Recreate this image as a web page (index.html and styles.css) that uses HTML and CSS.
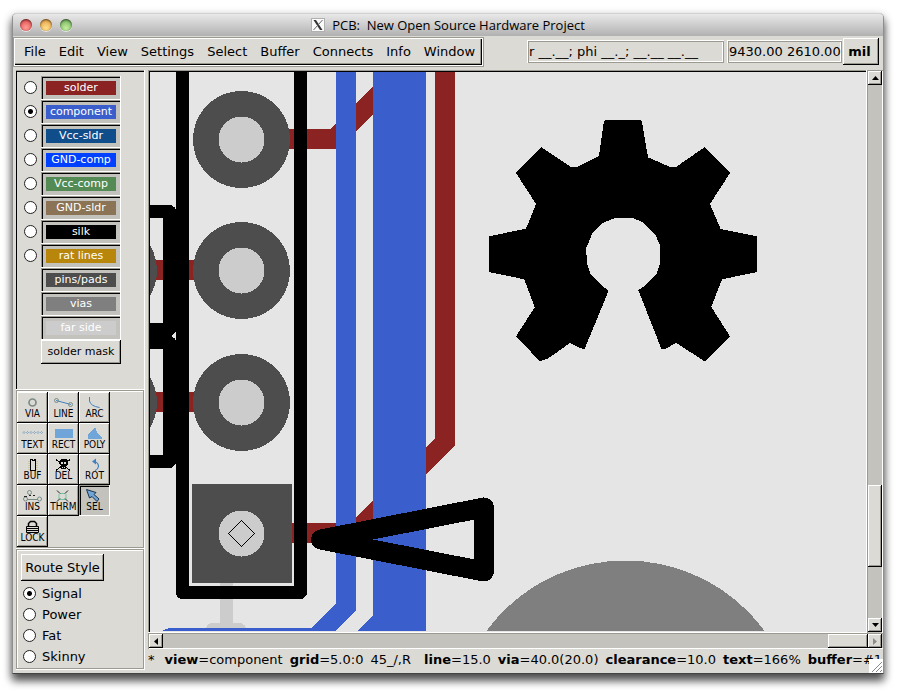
FILE: index.html
```html
<!DOCTYPE html>
<html lang="en">
<head>
<meta charset="utf-8">
<title>PCB: New Open Source Hardware Project</title>
<link rel="stylesheet" href="styles.css">
</head>
<body>
<div class="window">
  <header class="titlebar">
    <div class="lights"><button class="light close" aria-label="Close"></button><button class="light minimize" aria-label="Minimize"></button><button class="light maximize" aria-label="Zoom"></button></div>
    <h1 class="title">
      <svg class="app-icon" width="14" height="14" viewBox="0 0 14 14"><rect x=".5" y=".5" width="13" height="13" fill="#fafafa" stroke="#b0b0b0"/><path d="M2.500 2H5l6.500 10H9z" fill="#333"/><path d="M11.500 2 2.500 12" stroke="#666"/></svg>
      <span>PCB:&nbsp; New Open Source Hardware Project</span>
    </h1>
  </header>

  <div class="toolbar">
    <nav class="menubar">
      <button>File</button><button>Edit</button><button>View</button><button>Settings</button><button>Select</button><button>Buffer</button><button>Connects</button><button>Info</button><button>Window</button>
    </nav>
    <div class="readouts">
      <output class="readout relative">r __.__; phi __._; __.__ __.__</output>
      <output class="readout absolute">9430.00 2610.00</output>
      <button class="raised units">mil</button>
    </div>
  </div>

  <main class="workspace">
    <aside class="sidebar">
      <section class="layers">
        <div class="layer"><input type="radio" name="layer" aria-label="solder"><button class="swatch"><span class="solder">solder</span></button></div>
        <div class="layer"><input type="radio" name="layer" aria-label="component" checked><button class="swatch"><span class="component">component</span></button></div>
        <div class="layer"><input type="radio" name="layer" aria-label="Vcc-sldr"><button class="swatch"><span class="vcc-sldr">Vcc-sldr</span></button></div>
        <div class="layer"><input type="radio" name="layer" aria-label="GND-comp"><button class="swatch"><span class="gnd-comp">GND-comp</span></button></div>
        <div class="layer"><input type="radio" name="layer" aria-label="Vcc-comp"><button class="swatch"><span class="vcc-comp">Vcc-comp</span></button></div>
        <div class="layer"><input type="radio" name="layer" aria-label="GND-sldr"><button class="swatch"><span class="gnd-sldr">GND-sldr</span></button></div>
        <div class="layer"><input type="radio" name="layer" aria-label="silk"><button class="swatch"><span class="silk">silk</span></button></div>
        <div class="layer"><input type="radio" name="layer" aria-label="rat lines"><button class="swatch"><span class="rats">rat lines</span></button></div>
        <div class="layer"><button class="swatch"><span class="pins">pins/pads</span></button></div>
        <div class="layer"><button class="swatch"><span class="vias">vias</span></button></div>
        <div class="layer"><button class="swatch"><span class="far">far side</span></button></div>
        <div class="layer"><button class="raised mask">solder mask</button></div>
      </section>

      <section class="tools etched">
        <button class="raised tool"><svg class="smooth" viewBox="0 0 31 17"><circle cx="15.500" cy="10.500" r="3.500" fill="none" stroke="#7a8c87" stroke-width="1.700"/></svg><span>VIA</span></button>
        <button class="raised tool"><svg class="smooth" viewBox="0 0 31 17"><path d="M8 8.500 23 12.500" stroke="#4080c0"/><g fill="none" stroke="#7a8c87"><circle cx="8.500" cy="8.500" r="2"/><circle cx="22.500" cy="12.500" r="2"/></g></svg><span>LINE</span></button>
        <button class="raised tool"><svg class="smooth" viewBox="0 0 31 17"><path d="M10.500 5v4q1 5 10 6.500" fill="none" stroke="#4080c0"/></svg><span>ARC</span></button>
        <button class="raised tool"><svg class="smooth" viewBox="0 0 31 17"><path d="M6 9.500l1-1 1 1-1 1zM9.500 9.500l1-1 1 1-1 1zM13 9.500l1-1 1 1-1 1zM16.500 9.500l1-1 1 1-1 1zM20 9.500l1-1 1 1-1 1zM23.500 9.500l1-1 1 1-1 1z" fill="none" stroke="#6593bd" stroke-width=".8"/></svg><span>TEXT</span></button>
        <button class="raised tool"><svg viewBox="0 0 31 17"><path d="M7 6h18v9H7z" fill="#6fa5d8"/></svg><span>RECT</span></button>
        <button class="raised tool"><svg viewBox="0 0 31 17"><path d="M16 5h1l1 5 5 5v1H9v-5z" fill="#6fa5d8"/></svg><span>POLY</span></button>
        <button class="raised tool"><svg viewBox="0 0 31 17"><path d="M11 7.500h10M11 9.500h10M11 11.500h10M11 13.500h10M11 15.500h10" stroke="#d2c49c"/><path d="M13.500 5.500h1.500v1h2v-1h1.500v10.500h-5z" fill="#dcdad5" stroke="#000"/></svg><span>BUF</span></button>
        <button class="raised tool"><svg viewBox="0 0 31 17"><path d="M8 5.500 22 16.500M22 5.500 8 16.500" stroke="#000"/><path d="M13 5h5l2 2v3l-2 2v3h-5v-3l-2-2V7z"/><path d="M13 8h2v2h-2zM16 8h2v2h-2zM14 13h1v1h-1zM16 13h1v1h-1z" fill="#dcdad5"/></svg><span>DEL</span></button>
        <button class="raised tool"><svg class="smooth" viewBox="0 0 31 17"><path d="M15 7.500q4.500 1 4.500 5-.5 3-3.500 4" fill="none" stroke="#4080c0" stroke-width="1.200"/><path d="M13 7.500 17 4.500v6z" fill="#4080c0"/></svg><span>ROT</span></button>
        <button class="raised tool"><svg class="smooth" viewBox="0 0 31 17"><g fill="none" stroke="#7a8c87"><circle cx="8.500" cy="14" r="2"/><circle cx="22.500" cy="14" r="2"/><circle cx="12.500" cy="7.500" r="2"/><path d="M10 14.500h11"/></g><path d="M7 11.500h3M12 10.500h2M16 10.500h2" stroke="#222"/></svg><span>INS</span></button>
        <button class="raised tool"><svg class="smooth" viewBox="0 0 31 17"><path d="M12 8.500h5l1 1v4l-1 1h-5l-1-1v-4z" fill="none" stroke="#70c5a0"/><path d="M9 5.500l3 3M20 5.500l-3 3M9 16.500l3-3M20 16.500l-3-3" stroke="#222"/></svg><span>THRM</span></button>
        <button class="raised tool pressed"><svg class="smooth" viewBox="0 0 31 17"><path d="M7.500 4.500 17 7.500 15 9.500 20 14 18 16.500 13 11.500 10.500 13z" fill="#6fa5d8" stroke="#1d3147"/></svg><span>SEL</span></button>
        <button class="raised tool"><svg class="smooth" viewBox="0 0 31 17"><path d="M11.500 11V7.500l2-2h4l2 2V11" fill="none" stroke="#000" stroke-width="1.500"/><path d="M9.500 10.500h12v6h-12zM9 12.500h13M9 14.500h13" fill="none" stroke="#000"/></svg><span>LOCK</span></button>
      </section>

      <section class="routes etched">
        <button class="raised route-style">Route Style</button>
        <label><input type="radio" name="route" checked>Signal</label>
        <label><input type="radio" name="route">Power</label>
        <label><input type="radio" name="route">Fat</label>
        <label><input type="radio" name="route">Skinny</label>
      </section>
    </aside>

    <div class="editor">
      <div class="board">
        <svg viewBox="150 72 716 559" preserveAspectRatio="xMinYMin slice" shape-rendering="crispEdges">
          <!-- vias -->
          <circle cx="625.500" cy="733" r="172.500" fill="#7f7f7f"/>
          <!-- far side silk -->
          <g fill="none" stroke="#ccc" stroke-width="13" stroke-linecap="round"><path d="M226.500 580v48M212.500 629.500h27"/></g>
          <!-- solder side -->
          <g fill="#8b2323">
            <path d="M285 129h45l43-43v28.500L338.500 149H285zM150 260h60v20h-60zM150 392h60v20h-60zM435 72h20v373l-98 98h-67v-20h60l85-85z"/>
          </g>
          <!-- component side -->
          <g fill="#3a5fcd">
            <path d="M336 72h20v538l-21 21H163v-1l6-2h142l25-25zM373 72h53v559h-69l16-16z"/>
          </g>
          <!-- pins -->
          <g fill="#4d4d4d">
            <circle cx="241.500" cy="139.500" r="48.500"/><circle cx="241.500" cy="270.500" r="48.500"/><circle cx="241.500" cy="402.500" r="48.500"/>
            <circle cx="108.500" cy="270.500" r="48.500"/><circle cx="108.500" cy="402.500" r="48.500"/>
            <path d="M192 484h100v99H192z"/>
          </g>
          <path d="M189 583h105v3H189zM292 484h2v102h-2z" fill="#e5e5e5"/>
          <g fill="#ccc">
            <circle cx="241.500" cy="139.500" r="23"/><circle cx="241.500" cy="270.500" r="23"/><circle cx="241.500" cy="402.500" r="23"/><circle cx="241.500" cy="533.500" r="23"/>
            <path d="M220 583h13v3h-13z"/>
          </g>
          <path d="M292 523h2v20h-2z" fill="#8b2323"/>
          <path d="M241.500 520.500l13 13-13 13-13-13z" fill="none" stroke="#000"/>
          <!-- silk -->
          <g fill="none" stroke="#000" stroke-linejoin="round">
            <path d="M182.500 60v532.500h118V60M140 211.500h29.500v118H140M140 342.500h29.500v119H140" stroke-width="13"/>
            <path d="M321 539.500 484 507.500v64z" stroke-width="20"/>
          </g>
          <path d="M604 121L605 120H641L642 122.500 648 157.300 670 167H676L704.300 147.300 730 173 710 204 720.700 229 757 236.300V272L722 279.300 711.300 307 730 336.300 706.300 360.700H703.700L676.300 343 665.300 348.700H661.300L638.300 290 643.300 287 656.700 273.700 660 263.300V245.300L655 234 643 222.300 632.300 218H615.300L603.300 222.700 592.300 233.300 586 248.700 587.300 264.700 590.700 274 604 287.300 608 290 607.300 294 584.700 348.700H582L570 343 548.300 358.300 541.700 360.700H539.300L516 336.300 534.700 307.300 524.300 279.300 489 272V236.300L526 228.700 536 204 516 173 541.700 147.300 571 167H576.700L599 156z"/>
        </svg>
      </div>
      <div class="scrollbar vertical">
        <button class="raised arrow" aria-label="Scroll up"><svg viewBox="0 0 7 4"><path d="M3.500 0 7 4H0z"/></svg></button>
        <div class="track"><div class="before"></div><div class="raised thumb"></div><div class="after"></div></div>
        <button class="raised arrow" aria-label="Scroll down"><svg viewBox="0 0 7 4"><path d="M0 0h7L3.500 4z"/></svg></button>
      </div>
      <div class="scrollbar horizontal">
        <button class="raised arrow" aria-label="Scroll left"><svg viewBox="0 0 4 7"><path d="M4 0v7L0 3.500z"/></svg></button>
        <div class="track"><div class="before"></div><div class="raised thumb"></div></div>
        <button class="raised arrow" aria-label="Scroll right" disabled><svg viewBox="0 0 4 7"><path d="M0 0v7l4-3.500z" fill="#8e8c86"/></svg></button>
      </div>
      <footer class="status"><span class="modified">*</span><span><b>view</b>=component</span><span><b>grid</b>=5.0:0</span><span class="angle">45_/,R</span><span><b>line</b>=15.0</span><span><b>via</b>=40.0(20.0)</span><span><b>clearance</b>=10.0</span><span><b>text</b>=166%</span><span><b>buffer</b>=#1</span></footer>
    </div>
  </main>
  <svg class="grip" width="14" height="14" viewBox="0 0 14 14"><path d="M0 0h14v14H0z" fill="#fff"/><path d="M3 13 13 3M7 13l6-6M11 13l2-2" stroke="#8a8a8a"/></svg>
</div>
</body>
</html>
```
FILE: styles.css
```css
:root {
  --face: #dcdad5;
  --trough: #c4c2bd;
  --shade: #9c9a90;
  --sans: "DejaVu Sans", sans-serif;
}

* { box-sizing: border-box; }

body {
  margin: 0;
  height: 100vh;
  padding: 13px 15px 17px 12px;
  background: #fff;
  font: 13px/16px var(--sans);
  color: #000;
  overflow: hidden;
}

button {
  margin: 0;
  padding: 0;
  border: 0;
  background: none;
  font: inherit;
  color: inherit;
}

.window {
  position: relative;
  height: 100%;
  display: flex;
  flex-direction: column;
  background: var(--face);
  border: solid #8f8f8f;
  border-width: 0 1px 1px;
  border-bottom-color: #444;
  border-radius: 5px 5px 0 0;
  box-shadow: 0 7px 9px rgba(0, 0, 0, .6), 0 3px 10px rgba(0, 0, 0, .3);
}

/* Title bar */
.titlebar {
  flex: none;
  height: 23px;
  display: grid;
  grid-template-columns: 1fr auto 1fr;
  align-items: center;
  padding: 0 7px;
  background: linear-gradient(#e9e9e9, #b1b1b1);
  border-top: 1px solid #d2d2d2;
  border-radius: 4px 4px 0 0;
}
.lights { display: flex; gap: 8px; }
.light {
  width: 12px;
  height: 12px;
  border-radius: 50%;
  box-shadow: inset 0 1px 2px rgba(0, 0, 0, .6), 0 1px 0 rgba(255, 255, 255, .6);
}
.close { background: radial-gradient(circle at 50% 70%, #ff9c95, #d63a3c); }
.minimize { background: radial-gradient(circle at 50% 75%, #ffe08a, #dc9036); }
.maximize { background: radial-gradient(circle at 50% 75%, #c6ef9f, #5da24b); }
.title {
  margin: 0;
  display: flex;
  align-items: center;
  gap: 7px;
  font: 13px/20px "Open Sans", sans-serif;
  white-space: nowrap;
}

/* Menus and readouts */
.toolbar {
  flex: none;
  height: 34px;
  display: flex;
  justify-content: space-between;
  align-items: flex-start;
  padding: 1px 4px 0 0;
}
.menubar {
  display: flex;
  gap: 1px;
  height: 30px;
  padding: 0 2px 0 4px;
  border: 1px solid var(--shade);
  box-shadow: inset 1px 1px #fff, inset -1px -1px #fff, inset -2px -2px #000, inset -3px -3px var(--shade);
}
.menubar button { padding: 0 6px; }
.readouts { display: flex; align-items: center; }
.readout {
  height: 23px;
  padding: 4px 2px;
  overflow: hidden;
  white-space: nowrap;
  box-shadow: inset 1px 1px #fff, inset -1px -1px var(--shade), inset 2px 2px var(--shade), inset -2px -2px #fff;
}
.relative { width: 197px; margin-right: 3px; }
.absolute { width: 115px; margin-right: 1px; }

.raised {
  background: var(--face);
  box-shadow: inset -1px -1px #000, inset 1px 1px #fff, inset -2px -2px var(--shade);
}
.units { width: 36px; height: 27px; margin-top: 1px; padding-right: 3px; font-weight: bold; }

/* Sidebar */
.workspace { flex: 1; min-height: 0; display: flex; gap: 3px; padding-left: 3px; }
.sidebar { flex: none; width: 129px; display: flex; flex-direction: column; padding-bottom: 3px; }

input[type="radio"] {
  appearance: none;
  flex: none;
  width: 13px;
  height: 13px;
  margin: 0 0 1px;
  border: 1px solid #222;
  border-radius: 50%;
  background: #fff;
}
input[type="radio"]:checked { background: radial-gradient(circle, #000 2px, #fff 3px); }

.layers {
  flex: 1;
  min-height: 0;
  padding: 6px 0 0 8px;
  box-shadow: inset -1px -1px #fff, inset 0 1px var(--shade), inset 1px 2px #000;
}
.layer { display: flex; align-items: center; justify-content: flex-end; gap: 4px; width: 97px; height: 24px; font-size: 11px; }
.swatch {
  width: 80px;
  height: 24px;
  padding: 5px;
  background: var(--trough);
  box-shadow: inset -1px -1px #fff, inset 1px 1px var(--shade), inset 2px 2px #000;
}
.swatch span { display: block; line-height: 14px; color: #fff; }
.mask { width: 80px; height: 24px; white-space: nowrap; }
.solder { background: #8b2323; }
.component { background: #3a5fcd; }
.vcc-sldr { background: #104e8b; }
.gnd-comp { background: #0040ff; }
.vcc-comp { background: #548b54; }
.gnd-sldr { background: #8b7355; }
.silk { background: #000; }
.rats { background: #b8860b; }
.pins { background: #4d4d4d; }
.vias { background: #7f7f7f; }
.far { background: #ccc; }

.etched { box-shadow: inset -1px -1px #fff, inset 1px 1px var(--shade), inset -2px -2px var(--shade), inset 2px 2px #fff; }
.tools { display: grid; grid-template-columns: repeat(3, 31px); grid-auto-rows: 31px; padding: 2px 1px; }
.tool {
  display: flex;
  flex-direction: column;
  align-items: center;
  font: 10px/10px "DejaVu Sans Condensed", "DejaVu Sans", sans-serif;
}
.tool svg { flex: none; width: 31px; height: 17px; display: block; shape-rendering: crispEdges; }
.tool svg.smooth { shape-rendering: auto; }
.pressed { background: var(--trough); box-shadow: inset -1px -1px #fff, inset 1px 1px var(--shade), inset 2px 2px #000; }

.routes { display: flex; flex-direction: column; align-items: flex-start; padding: 5px 5px 3px; }
.route-style { width: 83px; height: 27px; margin-bottom: 2px; white-space: nowrap; }
.routes label { display: flex; align-items: center; gap: 6px; height: 21px; padding-left: 2px; }

/* Board and scroll bars */
.editor {
  flex: 1;
  min-width: 0;
  display: grid;
  grid-template: minmax(0, 1fr) 16px 24px / minmax(0, 1fr) 16px;
}
.board {
  padding: 2px 1px 2px 2px;
  background: #e5e5e5;
  box-shadow: inset -1px -1px #fff, inset 1px 1px var(--shade), inset 2px 2px #000;
}
.board svg { display: block; width: 100%; height: 100%; }
.scrollbar { display: flex; background: var(--trough); }
.vertical { flex-direction: column; padding: 1px; box-shadow: inset 1px 1px var(--shade), inset -1px 0 #fff; }
.horizontal { grid-column: 1 / -1; padding: 1px; box-shadow: inset 1px 1px var(--shade), inset 0 -1px #fff; }
.arrow { flex: none; width: 14px; height: 14px; display: flex; align-items: center; justify-content: center; }
.vertical .arrow svg { width: 7px; height: 4px; }
.horizontal .arrow svg { width: 4px; height: 7px; }
.track { flex: 1; display: flex; min-height: 0; }
.vertical .track { flex-direction: column; }
.vertical .before { flex: 400; }
.vertical .thumb { flex: 82; }
.vertical .after { flex: 51; }
.horizontal .before { flex: 665; }
.horizontal .thumb { flex: 40; }

.status {
  grid-column: 1 / -1;
  display: flex;
  gap: 7px;
  overflow: hidden;
  padding-top: 3px;
  white-space: nowrap;
}
.modified { margin-right: 3px; }
.angle { margin-right: 6px; }
.grip { position: absolute; right: 0; bottom: 0; }
```
